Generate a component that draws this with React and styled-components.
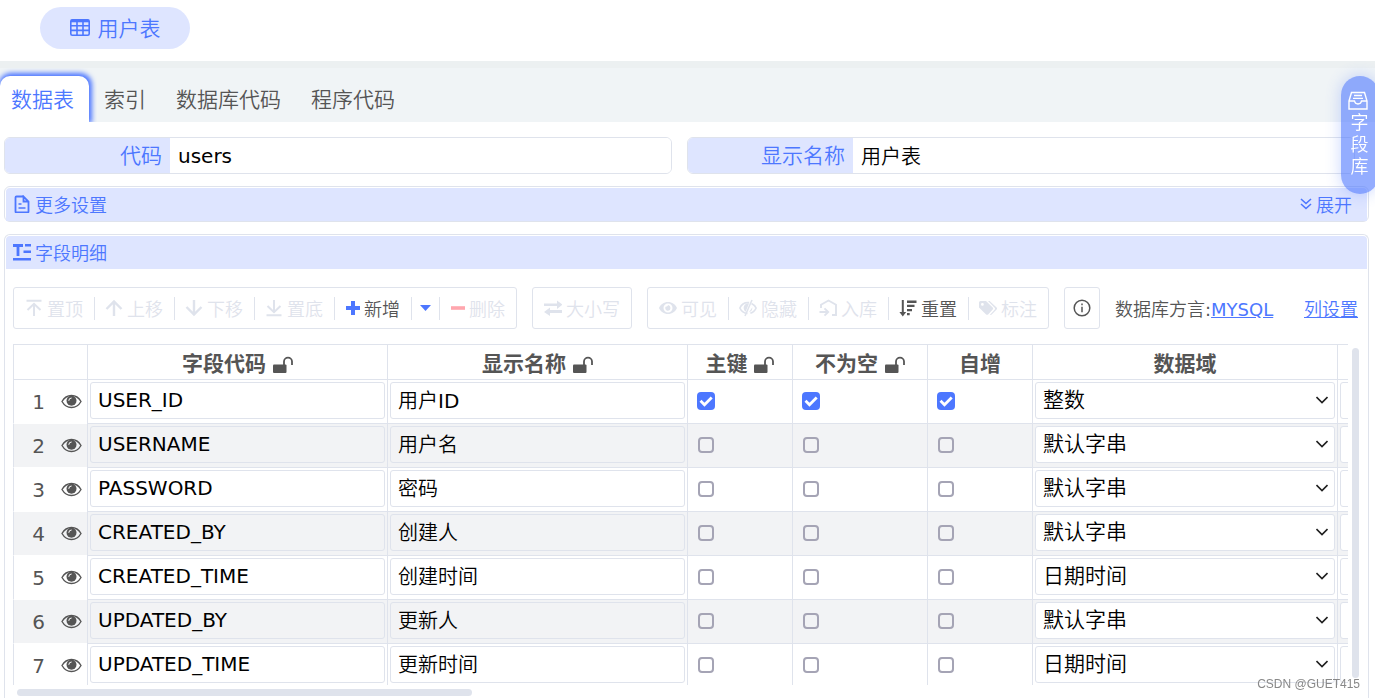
import React, { useState } from 'react'

import styled, { createGlobalStyle } from 'styled-components';

const GlobalStyle = createGlobalStyle`
  * {
    box-sizing: border-box;
  }
  body {
    margin: 0;
    background: #fff;
    color: #555;
    font-family: "DejaVu Sans", "Noto Sans CJK SC DemiLight", "Noto Sans CJK SC", sans-serif;
    font-size: 18px;
  }
  button, input, select {
    font: inherit;
    color: inherit;
    margin: 0;
  }
`;

const FIELDS = [
  { code: "USER_ID", name: "用户ID", checked: true, domain: "整数" },
  { code: "USERNAME", name: "用户名", checked: false, domain: "默认字串" },
  { code: "PASSWORD", name: "密码", checked: false, domain: "默认字串" },
  { code: "CREATED_BY", name: "创建人", checked: false, domain: "默认字串" },
  { code: "CREATED_TIME", name: "创建时间", checked: false, domain: "日期时间" },
  { code: "UPDATED_BY", name: "更新人", checked: false, domain: "默认字串" },
  { code: "UPDATED_TIME", name: "更新时间", checked: false, domain: "日期时间" },
];

const DOMAINS = ["整数", "默认字串", "日期时间"];

const stroke = { fill: "none", stroke: "currentColor", strokeWidth: 2 };

const GLYPHS = {
  table: (
    <g {...stroke} strokeWidth="1.6">
      <rect x="0.8" y="1.8" width="18.4" height="15.4" rx="1.5" />
      <path d="M1 3h18" strokeWidth="2.6" />
      <path d="M1 7.8h18M1 12.4h18M7 3v14M13 3v14" />
    </g>
  ),
  file: (
    <g {...stroke} strokeWidth="1.8">
      <path d="M10.5 1.5H3.5q-1 0-1 1v14q0 1 1 1h11q1 0 1-1V6.5l-5-5v5h5" />
      <path d="M5.5 9h3M5.5 13h7" strokeWidth="1.6" />
    </g>
  ),
  text: <path d="M0 1h10v3H6.4v9H3.6V4H0zM12 1h6v2.4h-6zM10.500 7.500H18v2.400h-7.500zM0 15h18v2.500H0z" fill="currentColor" />,
  expand: <path d="M1 1l5 4.500 5-4.500M1 6l5 4.500 5-4.500" {...stroke} strokeWidth="1.6" />,
  inbox: (
    <g {...stroke} strokeWidth="1.4">
      <path d="M1 10L3.500 1.500h13L19 10v8H1zM1 10h5.500q.5 3 3.500 3t3.500-3H19" />
      <path d="M6 4.500h8M5 7.300h10" strokeWidth="1.3" />
    </g>
  ),
  top: <path d="M1.500 1.700h15M9 17V5M2.500 11L9 4.800 15.500 11" {...stroke} />,
  up: <path d="M9 17V2.500M1.500 10L9 2.500 16.500 10" {...stroke} strokeWidth="2.4" />,
  down: <path d="M9 1v14.500M1.500 8L9 15.500 16.500 8" {...stroke} strokeWidth="2.4" />,
  bottom: <path d="M1.500 16.300h15M9 1v12M2.500 7L9 13.200 15.500 7" {...stroke} />,
  plus: <path d="M8 2v14M1 9h14" {...stroke} strokeWidth="4" strokeLinejoin="round" />,
  minus: <path d="M1 9h14" {...stroke} strokeWidth="3.600" />,
  caret: <path d="M0 6h11L5.500 12z" fill="currentColor" />,
  swap: <path d="M0 4.500h13V1.500l5.500 4.200L13 10V7H0zM18.500 11H6V8.500L0 13l6 4v-3h12.500z" fill="currentColor" />,
  eyeSolid: (
    <path
      d="M9 3C4.800 3 1.600 5.500 0 9c1.600 3.500 4.800 6 9 6s7.400-2.500 9-6c-1.600-3.500-4.800-6-9-6zm0 1.500a4.500 4.500 0 110 9 4.500 4.500 0 010-9zm0 1.600c-.2.9-.9 1.700-2.500 1.700-.8 2 .6 4 2.600 4a2.900 2.900 0 000-5.700z"
      fill="currentColor" fillRule="evenodd"
    />
  ),
  eyeSlash: (
    <g>
      <path d="M8.500 14.300C5 14.300 2.200 12 .9 9 2.200 6 5 3.700 8.800 3.700h1.400M12.500 4.500c2 .9 3.700 2.500 4.600 4.500-1.100 2.600-3.200 4.600-5.700 5.200" {...stroke} strokeWidth="1.700" />
      <path d="M10 4.500C6.500 4 4.500 6.500 4.700 9.300c.1 1.600.9 2.700 1.900 3.400zM13.300 8.300c.3 2.400-1 4.400-3.300 5z" fill="currentColor" />
      <path d="M13 1L6 17" {...stroke} strokeWidth="1.600" />
    </g>
  ),
  store: (
    <g {...stroke} strokeWidth="1.900">
      <path d="M2 9V5.800L9.500 1.500 17 5.800V16h-4" />
      <path d="M.5 13h8M5.500 9.300L9.200 13l-3.700 3.700" />
    </g>
  ),
  sort: (
    <g fill="currentColor">
      <path d="M2.800 1h2v12h2.400l-3.400 4.500L.4 13h2.400zM8 1.500h9.500V4H8zM8 5.800h7.500v2.300H8zM8 10h5v2.200H8zM8 14h2.700v2.200H8z" />
    </g>
  ),
  tags: (
    <path
      d="M0 3.500Q0 2 1.500 2H7l6.700 6.600q.9 1 0 2l-4.600 4.800q-1 .9-2 0L0 8.600zM3.400 4a1.400 1.400 0 100 2.800 1.400 1.400 0 000-2.800zM9 2h1.600l7 6.600q.9 1 0 2L12.700 15.500q-.8.800-1.700.2l4.600-5q.9-1 0-2z"
      fill="currentColor" fillRule="evenodd"
    />
  ),
  info: (
    <g {...stroke} strokeWidth="1.500">
      <circle cx="9" cy="9" r="7.800" />
      <path d="M9 4.600v1.700M9 7.800v5.400" />
    </g>
  ),
  unlock: (
    <g>
      <rect x="0" y="8.500" width="13.500" height="8.500" rx="1" fill="currentColor" />
      <path d="M11 9V5.600a4 4 0 018 0V9" {...stroke} strokeWidth="1.800" />
    </g>
  ),
  eye: (
    <g>
      <path d="M1 8.500C3 5 6.300 2.500 10.500 2.500S18 5 20 8.500c-2 3.500-5.300 6-9.500 6S3 12 1 8.500z" {...stroke} strokeWidth="1.400" />
      <circle cx="10.500" cy="7.800" r="5" fill="currentColor" />
      <path d="M7.800 7.800a2.800 2.800 0 012.800-2.800" fill="none" stroke="#fff" strokeWidth="1" />
    </g>
  ),
};

const Icon = ({ name, width = 18, height = 18 }) => (
  <Svg width={width} height={height} viewBox={`0 0 ${width} ${height}`} aria-hidden="true">
    {GLYPHS[name]}
  </Svg>
);

const Tool = ({ icon, label, compact, disabled, danger, primary }) => (
  <ToolButton type="button" $compact={compact} disabled={disabled} $danger={danger} $primary={primary}>
    <Icon name={icon} width={compact ? 16 : 18} />
    <span>{label}</span>
  </ToolButton>
);

const FieldRow = ({ field, index }) => {
  const [row, setRow] = useState({ ...field, pk: field.checked, notNull: field.checked, auto: field.checked });

  const handleChange = (event) => {
    const target = event.target;
    const value = target.type === 'checkbox' ? target.checked : target.value;
    setRow({ ...row, [target.name]: value });
  };

  return (
    <Row>
      <IndexCell>
        <IndexBox>
          <span>{index}</span>
          <Icon name="eye" width={21} height={17} />
        </IndexBox>
      </IndexCell>
      <Cell><Input name="code" aria-label="字段代码" value={row.code} onChange={handleChange} /></Cell>
      <Cell><Input name="name" aria-label="显示名称" value={row.name} onChange={handleChange} /></Cell>
      <CheckCell><Checkbox type="checkbox" name="pk" aria-label="主键" checked={row.pk} onChange={handleChange} /></CheckCell>
      <CheckCell><Checkbox type="checkbox" name="notNull" aria-label="不为空" checked={row.notNull} onChange={handleChange} /></CheckCell>
      <CheckCell><Checkbox type="checkbox" name="auto" aria-label="自增" checked={row.auto} onChange={handleChange} /></CheckCell>
      <Cell>
        <Select name="domain" aria-label="数据域" value={row.domain} onChange={handleChange}>
          {DOMAINS.map(domain => <option key={domain}>{domain}</option>)}
        </Select>
      </Cell>
      <Cell><Select aria-label="数据类型" /></Cell>
    </Row>
  );
};

export default function App() {
  const [code, setCode] = useState("users");
  const [name, setName] = useState("用户表");

  return (
    <Page>
      <GlobalStyle />
      <Header>
        <OpenTab type="button">
          <Icon name="table" width={20} />
          用户表
        </OpenTab>
      </Header>
      <Tabs>
        <Tab type="button" $active>数据表</Tab>
        <Tab type="button">索引</Tab>
        <Tab type="button">数据库代码</Tab>
        <Tab type="button">程序代码</Tab>
      </Tabs>
      <Form>
        <Group>
          <Label htmlFor="code">代码</Label>
          <TextInput id="code" value={code} onChange={e => setCode(e.target.value)} />
        </Group>
        <Group>
          <Label htmlFor="name">显示名称</Label>
          <TextInput id="name" value={name} onChange={e => setName(e.target.value)} />
        </Group>
      </Form>
      <Panel>
        <PanelTitle>
          <Icon name="file" />
          更多设置
          <Expand type="button">
            <Icon name="expand" width={12} height={12} />
            展开
          </Expand>
        </PanelTitle>
      </Panel>
      <Panel $grow>
        <PanelTitle>
          <Icon name="text" />
          字段明细
        </PanelTitle>
        <Toolbar>
          <ToolGroup>
            <Tool icon="top" label="置顶" disabled />
            <Tool icon="up" label="上移" disabled />
            <Tool icon="down" label="下移" disabled />
            <Tool icon="bottom" label="置底" disabled />
            <Tool icon="plus" label="新增" compact primary />
            <CaretButton type="button" aria-label="更多新增"><Icon name="caret" width={11} /></CaretButton>
            <Tool icon="minus" label="删除" compact disabled danger />
          </ToolGroup>
          <ToolGroup>
            <Tool icon="swap" label="大小写" disabled />
          </ToolGroup>
          <ToolGroup>
            <Tool icon="eyeSolid" label="可见" disabled />
            <Tool icon="eyeSlash" label="隐藏" disabled />
            <Tool icon="store" label="入库" disabled />
            <Tool icon="sort" label="重置" />
            <Tool icon="tags" label="标注" disabled />
          </ToolGroup>
          <InfoButton type="button" aria-label="说明"><Icon name="info" /></InfoButton>
          <span>数据库方言:<Link href="#dialect">MYSQL</Link></span>
          <ColumnLink href="#columns">列设置</ColumnLink>
        </Toolbar>
        <TableArea>
          <TableView>
            <Table>
              <colgroup>
                <Col $width={74} />
                <Col $width={300} />
                <Col $width={300} />
                <Col $width={105} />
                <Col $width={135} />
                <Col $width={105} />
                <Col $width={305} />
                <Col $width={240} />
              </colgroup>
              <thead>
                <tr>
                  <HeadCell />
                  <HeadCell>字段代码 <Icon name="unlock" width={20} height={17} /></HeadCell>
                  <HeadCell>显示名称 <Icon name="unlock" width={20} height={17} /></HeadCell>
                  <HeadCell>主键 <Icon name="unlock" width={20} height={17} /></HeadCell>
                  <HeadCell>不为空 <Icon name="unlock" width={20} height={17} /></HeadCell>
                  <HeadCell>自增</HeadCell>
                  <HeadCell>数据域</HeadCell>
                  <HeadCell />
                </tr>
              </thead>
              <tbody>
                {FIELDS.map((field, i) => <FieldRow key={field.code} field={field} index={i + 1} />)}
              </tbody>
            </Table>
          </TableView>
          <VerticalBar />
        </TableArea>
        <HorizontalTrack>
          <HorizontalBar />
        </HorizontalTrack>
      </Panel>
      <Library type="button">
        <Icon name="inbox" width={20} height={19} />
        <span>字段库</span>
      </Library>
      <Watermark>CSDN @GUET415</Watermark>
    </Page>
  );
}

const Svg = styled.svg`
  flex: none;
`;

const Page = styled.main`
  display: flex;
  flex-direction: column;
  height: 100vh;
  overflow: hidden;
`;

const Header = styled.header`
  flex: none;
  height: 61px;
  padding: 7px 40px;
`;

const OpenTab = styled.button`
  display: flex;
  align-items: center;
  justify-content: center;
  gap: 8px;
  width: 150px;
  height: 42px;
  padding: 0 0 2px;
  border: none;
  border-radius: 21px;
  background: #dee5ff;
  color: #4d77ff;
  font-size: 21px;
`;

const Tabs = styled.nav`
  display: flex;
  flex: none;
  height: 61px;
  padding-top: 8px;
  border-top: 7px solid #ecf0f1;
  background: #f0f4f6;
`;

const Tab = styled.button`
  padding: 0 15px 2px;
  border: none;
  background: transparent;
  font-size: 21px;
  ${props => props.$active && `
    padding-left: 11px;
    border-radius: 10px 10px 0 0;
    background: #fff;
    color: #4d77ff;
    box-shadow: 1px -1px 5px 2px #4d77ff;
    clip-path: inset(-8px -8px 0 0);
  `}
`;

const Form = styled.form`
  display: grid;
  grid-template-columns: 1fr 1fr;
  gap: 15px;
  flex: none;
  padding: 15px 20px 12px 4px;
`;

const Group = styled.div`
  display: flex;
  height: 37px;
  border: 1px solid #dfe3ec;
  border-radius: 6px;
  overflow: hidden;
`;

const Label = styled.label`
  flex: none;
  width: 165px;
  padding-right: 8px;
  background: #dee5ff;
  color: #4d77ff;
  font-size: 21px;
  line-height: 37px;
  text-align: right;
`;

const TextInput = styled.input`
  flex: 1;
  min-width: 0;
  padding: 0 8px;
  border: none;
  outline: none;
  background: #fff;
  color: #000;
  font-size: 20px;
`;

const Panel = styled.section`
  display: flex;
  flex-direction: column;
  flex: none;
  margin: 0 6px 12px 4px;
  padding: 1px 1px 0;
  border: 1px solid #dfe3ec;
  border-radius: 6px;
  ${props => props.$grow && `
    flex: 1;
    min-height: 0;
    margin-bottom: 0;
    border-bottom: none;
    border-radius: 6px 6px 0 0;
  `}
`;

const PanelTitle = styled.div`
  display: flex;
  align-items: center;
  flex: none;
  gap: 4px;
  height: 33px;
  padding: 0 15px 2px 7px;
  border-radius: 4px 4px 0 0;
  background: #dee5ff;
  color: #4d77ff;
`;

const Expand = styled.button`
  display: flex;
  align-items: center;
  gap: 4px;
  margin-left: auto;
  padding: 0;
  border: none;
  background: transparent;
`;

const Toolbar = styled.div`
  display: flex;
  align-items: center;
  flex: none;
  gap: 15px;
  padding: 18px 9px 15px 7px;
  white-space: nowrap;
`;

const ToolGroup = styled.div`
  display: flex;
  align-items: center;
  height: 42px;
  padding-left: 1px;
  border: 1px solid #dfe3ec;
  border-radius: 3px;
`;

const ToolButton = styled.button`
  display: flex;
  align-items: center;
  gap: ${props => props.$compact ? 3 : 4}px;
  height: 23px;
  padding: 0 11px 0 10px;
  border: none;
  background: transparent;
  & + & {
    border-left: 1px solid #dfe3ec;
  }
  &:disabled {
    color: #dfe3ec;
  }
  svg {
    ${props => props.$primary && 'color: #4d77ff;'}
    ${props => props.$danger && 'color: #ffa6ae;'}
  }
`;

const CaretButton = styled.button`
  display: flex;
  align-items: center;
  height: 23px;
  padding: 0 8px;
  border: solid #dfe3ec;
  border-width: 0 1px;
  background: transparent;
  color: #4d77ff;
`;

const InfoButton = styled.button`
  display: flex;
  align-items: center;
  justify-content: center;
  width: 36px;
  height: 42px;
  padding: 0;
  border: 1px solid #dfe3ec;
  border-radius: 3px;
  background: transparent;
`;

const Link = styled.a`
  color: #4d77ff;
`;

const ColumnLink = styled(Link)`
  margin-left: auto;
`;

const TableArea = styled.div`
  display: flex;
  flex: 1;
  gap: 4px;
  min-height: 0;
  padding: 0 8px 0 7px;
`;

const TableView = styled.div`
  flex: 1;
  min-width: 0;
  overflow: hidden;
`;

const Table = styled.table`
  width: 1564px;
  table-layout: fixed;
  border-spacing: 0;
`;

const Col = styled.col`
  width: ${props => props.$width}px;
`;

const HeadCell = styled.th`
  height: 35px;
  padding: 0;
  border: solid #dfe3ec;
  border-width: 1px 0 0 1px;
  font-family: "Noto Sans CJK SC", sans-serif;
  font-size: 21px;
  font-weight: 700;
  line-height: 34px;
  svg {
    margin-left: 2px;
    vertical-align: -2px;
  }
`;

const Cell = styled.td`
  height: 44px;
  padding: 2px 2px 4px;
  border: solid #dfe3ec;
  border-width: 1px 0 0 1px;
`;

const IndexCell = styled(Cell)`
  padding: 0 5px 0 0;
`;

const IndexBox = styled.div`
  display: flex;
  align-items: center;
  justify-content: flex-end;
  gap: 16px;
  font-size: 20px;
`;

const CheckCell = styled(Cell)`
  padding: 0 10px 2px;
`;

const Row = styled.tr`
  &:nth-child(even) {
    background: #f2f3f5;
  }
  &:not(:first-child) ${IndexCell} {
    border-top-color: #fff;
  }
`;

const Input = styled.input`
  display: block;
  width: 100%;
  height: 37px;
  padding: 0 7px 2px;
  border: 1px solid #dfe3ec;
  border-radius: 3px;
  outline: none;
  background: transparent;
  color: #000;
  font-size: 20px;
`;

const Select = styled.select`
  display: block;
  width: 100%;
  height: 37px;
  padding: 0 7px 2px;
  border: 1px solid #dfe3ec;
  border-radius: 3px;
  outline: none;
  appearance: none;
  background: #fff url("data:image/svg+xml,%3Csvg xmlns='http://www.w3.org/2000/svg' width='12' height='8' fill='none' stroke='%23222' stroke-width='1.600'%3E%3Cpath d='M.5 1l5.500 5.500L11.500 1'/%3E%3C/svg%3E") no-repeat right 6px top 13px;
  color: #000;
  font-size: 21px;
`;

const Checkbox = styled.input`
  display: block;
  width: 16px;
  height: 16px;
  border: 2px solid #a5a4b5;
  border-radius: 4px;
  appearance: none;
  &:checked {
    border: none;
    border-radius: 3px;
    background: #4d77ff url("data:image/svg+xml,%3Csvg xmlns='http://www.w3.org/2000/svg' width='16' height='16' fill='none' stroke='white' stroke-width='2.800'%3E%3Cpath d='M2.500 7.800l4 4 7.200-7.200'/%3E%3C/svg%3E") center no-repeat;
    box-shadow: 0 0 0 1px #4d77ff;
  }
`;

const VerticalBar = styled.div`
  flex: none;
  width: 7px;
  margin: 4px 0 7px;
  border-radius: 4px;
  background: #dfe3ec;
`;

const HorizontalTrack = styled.div`
  flex: none;
  height: 13px;
  padding: 4px 11px 2px;
`;

const HorizontalBar = styled.div`
  width: 34%;
  height: 7px;
  border-radius: 4px;
  background: #dfe3ec;
`;

const Library = styled.button`
  position: fixed;
  top: 76px;
  right: -4px;
  display: flex;
  flex-direction: column;
  align-items: center;
  gap: 2px;
  width: 38px;
  height: 118px;
  padding: 15px 6px 0 1px;
  border: none;
  border-radius: 19px;
  background: rgba(77, 119, 255, 0.6);
  box-shadow: 0 0 15px rgba(77, 119, 255, 0.3);
  color: #fff;
  line-height: 22px;
  span {
    width: 18px;
    margin-left: 4px;
  }
`;

const Watermark = styled.div`
  position: fixed;
  right: 15px;
  bottom: 7px;
  color: #888;
  font-family: "Liberation Sans", sans-serif;
  font-size: 12px;
`;
